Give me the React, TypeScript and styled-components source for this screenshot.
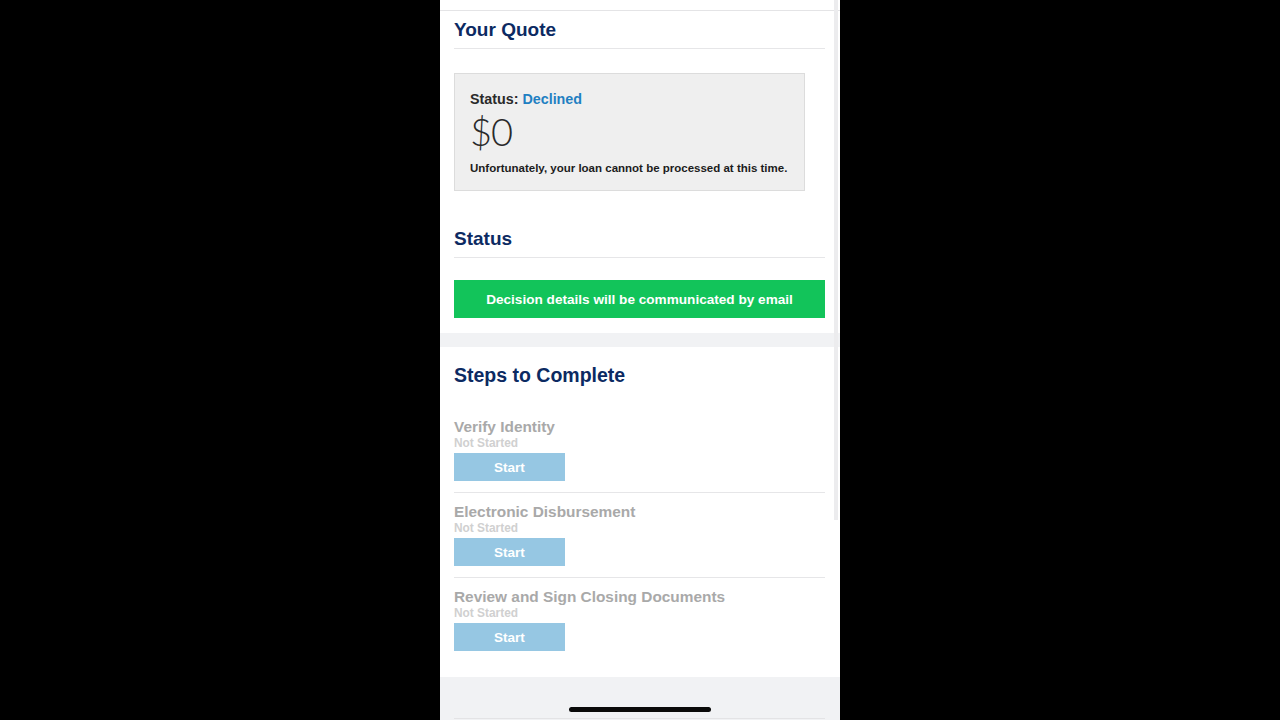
import { FunctionComponent } from 'react';
import { styled, createGlobalStyle } from 'styled-components';

interface Step {
  title: string;
  status: string;
}

const steps: Step[] = [
  { title: 'Verify Identity', status: 'Not Started' },
  { title: 'Electronic Disbursement', status: 'Not Started' },
  { title: 'Review and Sign Closing Documents', status: 'Not Started' },
];

const GlobalStyle = createGlobalStyle`
  html, body {
    margin: 0;
    padding: 0;
    background: #000;
  }
  body {
    font-family: 'Liberation Sans', Arial, sans-serif;
  }
`;

const App: FunctionComponent = () => {
  return (
    <>
      <GlobalStyle />
      <Stage>
        <Phone>
          <TopStrip />
          <Section>
            <SectionTitle>Your Quote</SectionTitle>
            <QuoteBox>
              <QuoteStatus>
                Status: <StatusValue>Declined</StatusValue>
              </QuoteStatus>
              <QuoteAmount>$0</QuoteAmount>
              <QuoteNote>
                Unfortunately, your loan cannot be processed at this time.
              </QuoteNote>
            </QuoteBox>

            <SectionTitle $spaced>Status</SectionTitle>
            <Banner>Decision details will be communicated by email</Banner>
          </Section>

          <Band />

          <StepsSection>
            <StepsTitle>Steps to Complete</StepsTitle>
            <StepList>
              {steps.map((step) => (
                <StepRow key={step.title}>
                  <StepName>{step.title}</StepName>
                  <StepStatus>{step.status}</StepStatus>
                  <StartButton type="button">Start</StartButton>
                </StepRow>
              ))}
            </StepList>
          </StepsSection>

          <Footer>
            <HomeIndicator />
            <FooterRule />
          </Footer>

          <ScrollTrack />
        </Phone>
      </Stage>
    </>
  );
};

const Stage = styled.div`
  width: 1280px;
  height: 720px;
  display: flex;
  justify-content: center;
  background: #000;
  overflow: hidden;
`;

const Phone = styled.div`
  position: relative;
  width: 400px;
  height: 720px;
  background: #fff;
  display: flex;
  flex-direction: column;
  overflow: hidden;
`;

const TopStrip = styled.div`
  height: 10px;
  border-bottom: 1px solid #e4e4e6;
`;

const Section = styled.div`
  padding: 7px 15px 15px 14px;
`;

const SectionTitle = styled.div<{ $spaced?: boolean }>`
  margin-top: ${({ $spaced }) => ($spaced ? '36px' : '0')};
  padding: 1px 0 7px;
  border-bottom: 1px solid #e6e6e8;
  color: #0c2a62;
  font-size: 19px;
  line-height: 22px;
  font-weight: bold;
`;

const QuoteBox = styled.div`
  margin-top: 24px;
  width: 351px;
  box-sizing: border-box;
  padding: 16px 8px 15px 15px;
  background: #efefef;
  border: 1px solid #dcdcdc;
  color: #222;
`;

const QuoteStatus = styled.div`
  margin-top: 1px;
  font-size: 14.3px;
  line-height: 17px;
  font-weight: bold;
  color: #2a2a2a;
`;

const StatusValue = styled.span`
  color: #1f80c2;
`;

const QuoteAmount = styled.div`
  margin-top: 1px;
  font-family: Lato, 'Open Sans', sans-serif;
  font-weight: 300;
  font-size: 38px;
  line-height: 44px;
  color: #2a2a2a;
  letter-spacing: -1px;
`;

const QuoteNote = styled.div`
  margin-top: 8px;
  font-size: 11.5px;
  line-height: 14px;
  font-weight: bold;
  color: #1c1c1c;
  white-space: nowrap;
`;

const Banner = styled.div`
  margin-top: 22px;
  height: 38px;
  display: flex;
  align-items: center;
  justify-content: center;
  background: #12c45a;
  color: #fff;
  font-size: 13.6px;
  font-weight: bold;
`;

const Band = styled.div`
  height: 14px;
  background: #f1f2f4;
`;

const StepsSection = styled.div`
  padding: 17px 15px 26px 14px;
  background: #fff;
`;

const StepsTitle = styled.div`
  color: #0c2a62;
  font-size: 19.5px;
  line-height: 22px;
  font-weight: bold;
`;

const StepList = styled.div`
  margin-top: 22px;
  display: flex;
  flex-direction: column;
`;

const StepRow = styled.div`
  display: flex;
  flex-direction: column;
  align-items: flex-start;
  padding: 10px 0 11px;
  border-bottom: 1px solid #e6e6e8;

  &:last-child {
    border-bottom: none;
    padding-bottom: 0;
  }
`;

const StepName = styled.div`
  color: #a9a9a9;
  font-size: 15.4px;
  line-height: 18px;
  font-weight: bold;
`;

const StepStatus = styled.div`
  color: #d0d0d0;
  font-size: 11.9px;
  line-height: 14px;
  font-weight: bold;
`;

const StartButton = styled.button`
  margin-top: 3px;
  width: 111px;
  height: 28px;
  border: none;
  border-radius: 0;
  padding: 0;
  background: #96c7e3;
  color: #fff;
  font-family: 'Liberation Sans', Arial, sans-serif;
  font-size: 13.5px;
  font-weight: bold;
`;

const Footer = styled.div`
  flex: 1;
  background: #f1f2f4;
  display: flex;
  flex-direction: column;
  align-items: center;
  justify-content: flex-end;
  padding: 0 15px 1px 14px;
`;

const HomeIndicator = styled.div`
  width: 142px;
  height: 5px;
  border-radius: 3px;
  background: #0a0a0a;
  margin-bottom: 6px;
`;

const FooterRule = styled.div`
  align-self: stretch;
  height: 1px;
  background: #e3e3e5;
`;

const ScrollTrack = styled.div`
  position: absolute;
  top: 0;
  right: 2px;
  width: 4px;
  height: 520px;
  background: #ececee;
`;

export default App;
